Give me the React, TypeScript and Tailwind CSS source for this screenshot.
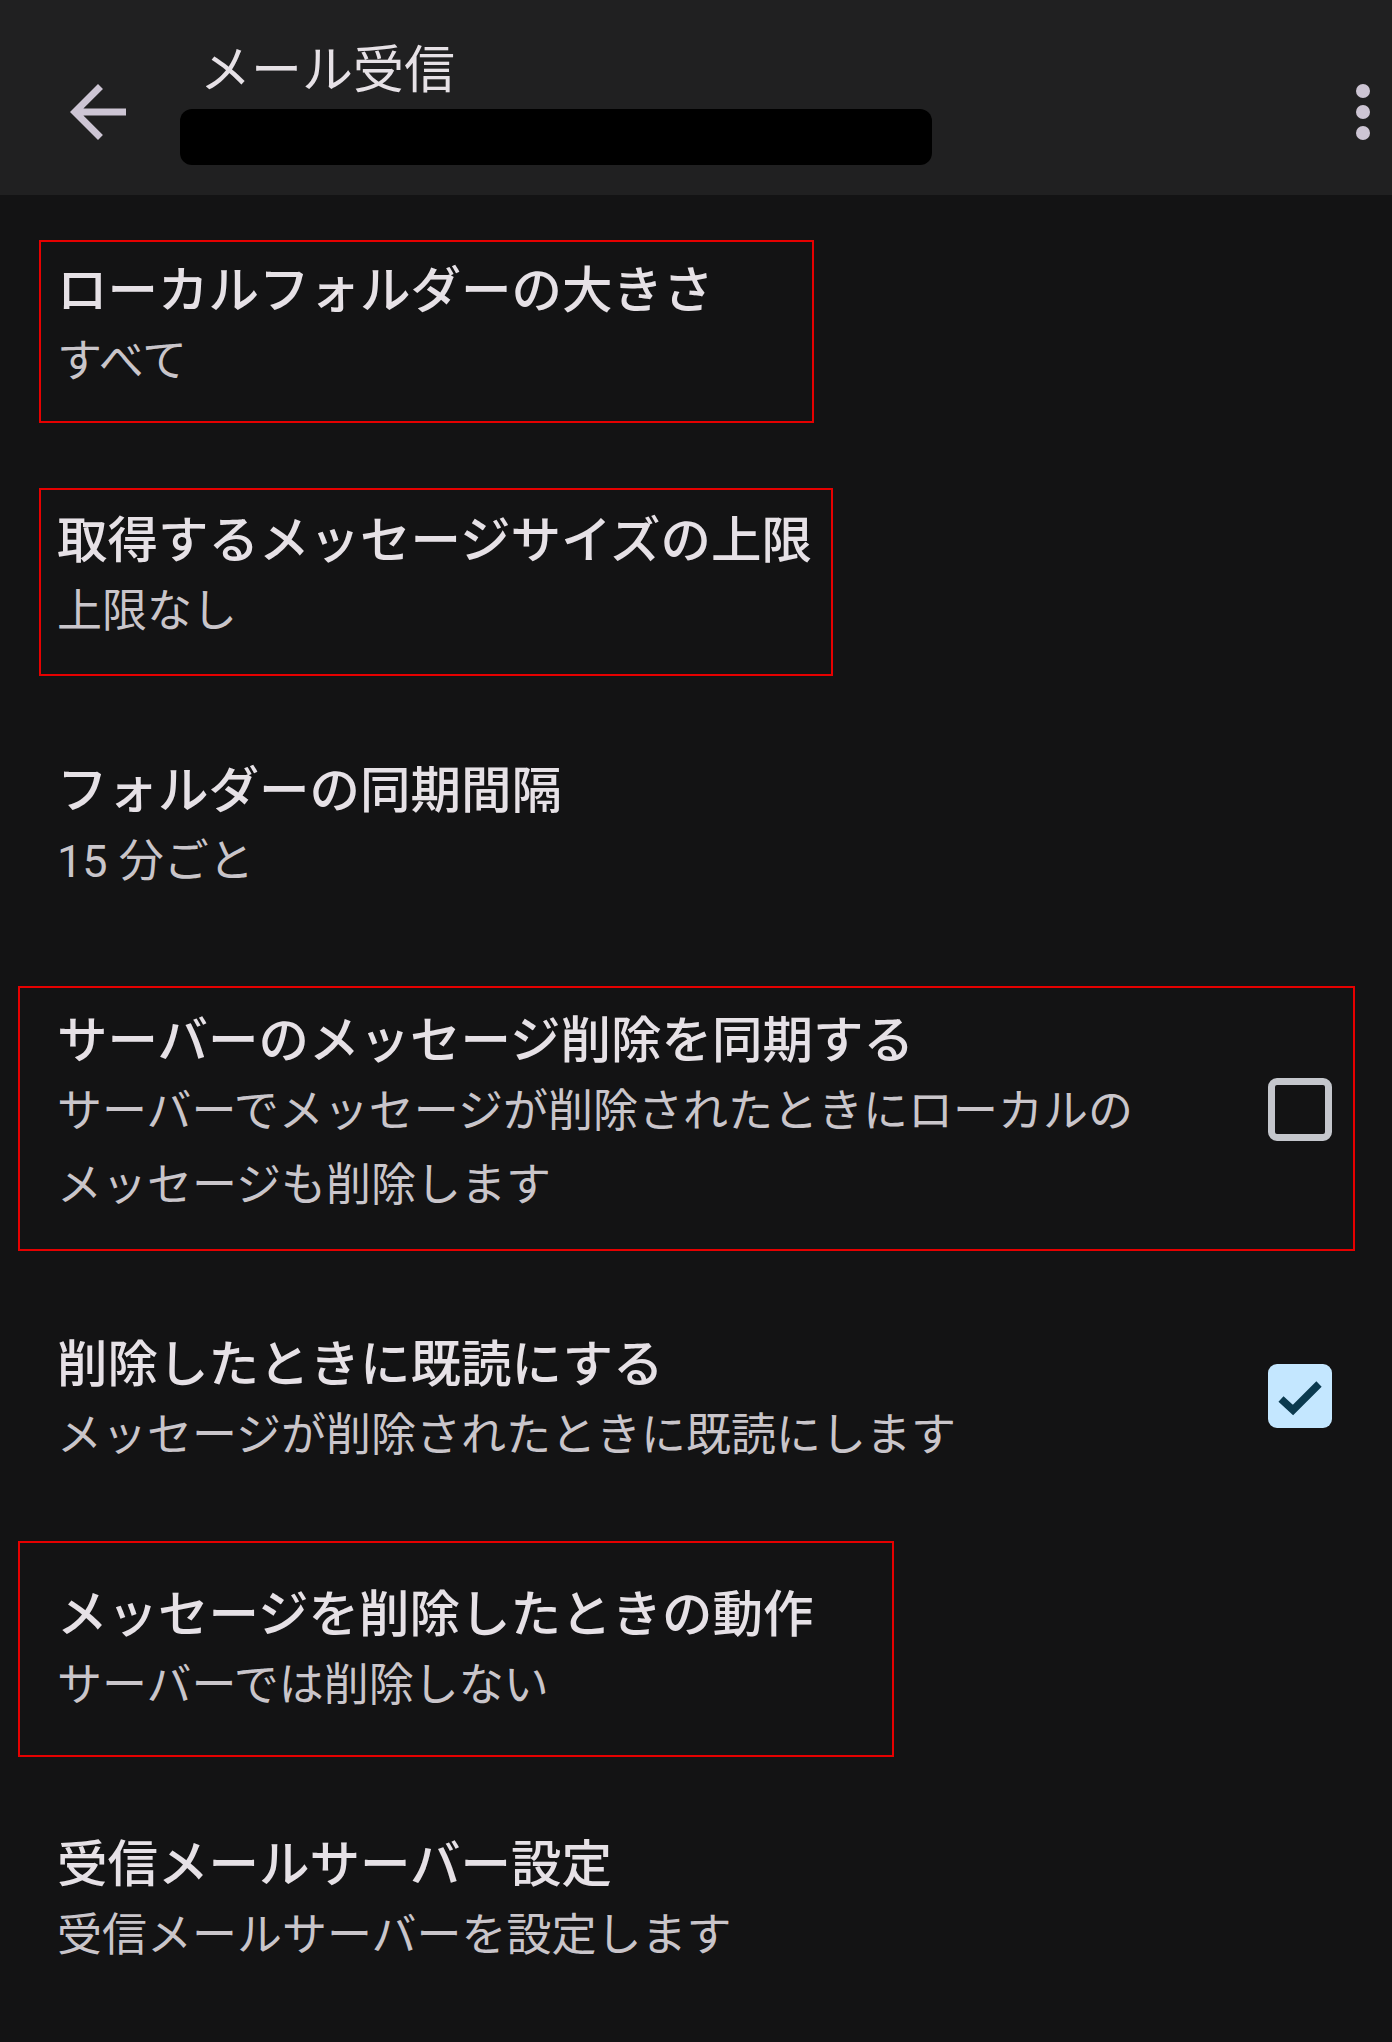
import React from 'react';

type Row = {
  title: string;
  summary: string[];
  check?: 'on' | 'off';
  mark?: string;
};

const rows: Row[] = [
  {
    title: 'ローカルフォルダーの大きさ',
    summary: ['すべて'],
    mark: 'top-[45px] left-[39px] w-[775px] h-[183px]',
  },
  {
    title: '取得するメッセージサイズの上限',
    summary: ['上限なし'],
    mark: 'top-[43px] left-[39px] w-[794px] h-[188px]',
  },
  { title: 'フォルダーの同期間隔', summary: ['15 分ごと'] },
  {
    title: 'サーバーのメッセージ削除を同期する',
    summary: ['サーバーでメッセージが削除されたときにローカルの', 'メッセージも削除します'],
    check: 'off',
    mark: 'top-[41px] left-[18px] w-[1337px] h-[265px]',
  },
  {
    title: '削除したときに既読にする',
    summary: ['メッセージが削除されたときに既読にします'],
    check: 'on',
  },
  {
    title: 'メッセージを削除したときの動作',
    summary: ['サーバーでは削除しない'],
    mark: 'top-[22px] left-[18px] w-[876px] h-[216px]',
  },
  { title: '受信メールサーバー設定', summary: ['受信メールサーバーを設定します'] },
];

function Checkbox({ on }: { on: boolean }) {
  if (on) {
    return (
      <div className="-mt-[12px] h-[64px] w-[64px] shrink-0 rounded-[9px] bg-[#c4e7ff]">
        <svg viewBox="0 0 64 64" className="h-full w-full">
          <polyline points="13,35 25,46 51,20" fill="none" stroke="#0b3a4f" strokeWidth="7.5" />
        </svg>
      </div>
    );
  }
  return <div className="-mt-[12px] h-[63px] w-[64px] shrink-0 rounded-[9px] border-[7px] border-[#c4c6cc]" />;
}

function SettingRow({ row }: { row: Row }) {
  return (
    <div className="relative flex items-center pl-[57px] pr-[60px] pt-[62px] pb-[46px]">
      <div className="flex-1">
        <div className="text-[50.5px] leading-[68px] font-medium text-[#e6e1e6]">{row.title}</div>
        {row.summary.map((line, i) => (
          <div key={i} className="text-[45px] leading-[74px] text-[#c9c5ca]">
            {line}
          </div>
        ))}
      </div>
      {row.check && <Checkbox on={row.check === 'on'} />}
      {row.mark && <div className={`pointer-events-none absolute border-2 border-[#e60000] ${row.mark}`} />}
    </div>
  );
}

export default function App() {
  return (
    <div className="min-h-screen bg-[#131314] font-['Roboto','Noto_Sans_CJK_JP',sans-serif]">
      <header className="flex h-[195px] bg-[#202021]">
        <div className="ml-[56px] mt-[70px] h-[84px] w-[84px] shrink-0">
          <svg viewBox="0 0 24 24" className="h-full w-full" fill="#cdc5d4">
            <path d="M20 11H7.83l5.59-5.59L12 4l-8 8 8 8 1.41-1.41L7.83 13H20v-2z" />
          </svg>
        </div>
        <div className="ml-[40px] flex flex-col pt-[37px]">
          <div className="pl-[20px] text-[51px] leading-[68px] text-[#e6e1e6]">メール受信</div>
          <div className="mt-[4px] h-[56px] w-[752px] rounded-[12px] bg-black" />
        </div>
        <div className="ml-auto mr-[15px] mt-[70px] h-[84px] w-[28px]">
          <svg viewBox="8 0 8 24" className="h-full w-full" fill="#cdc5d4">
            <circle cx="12" cy="6" r="2" />
            <circle cx="12" cy="12" r="2" />
            <circle cx="12" cy="18" r="2" />
          </svg>
        </div>
      </header>
      <main>
        {rows.map((row, i) => (
          <SettingRow key={i} row={row} />
        ))}
      </main>
    </div>
  );
}
